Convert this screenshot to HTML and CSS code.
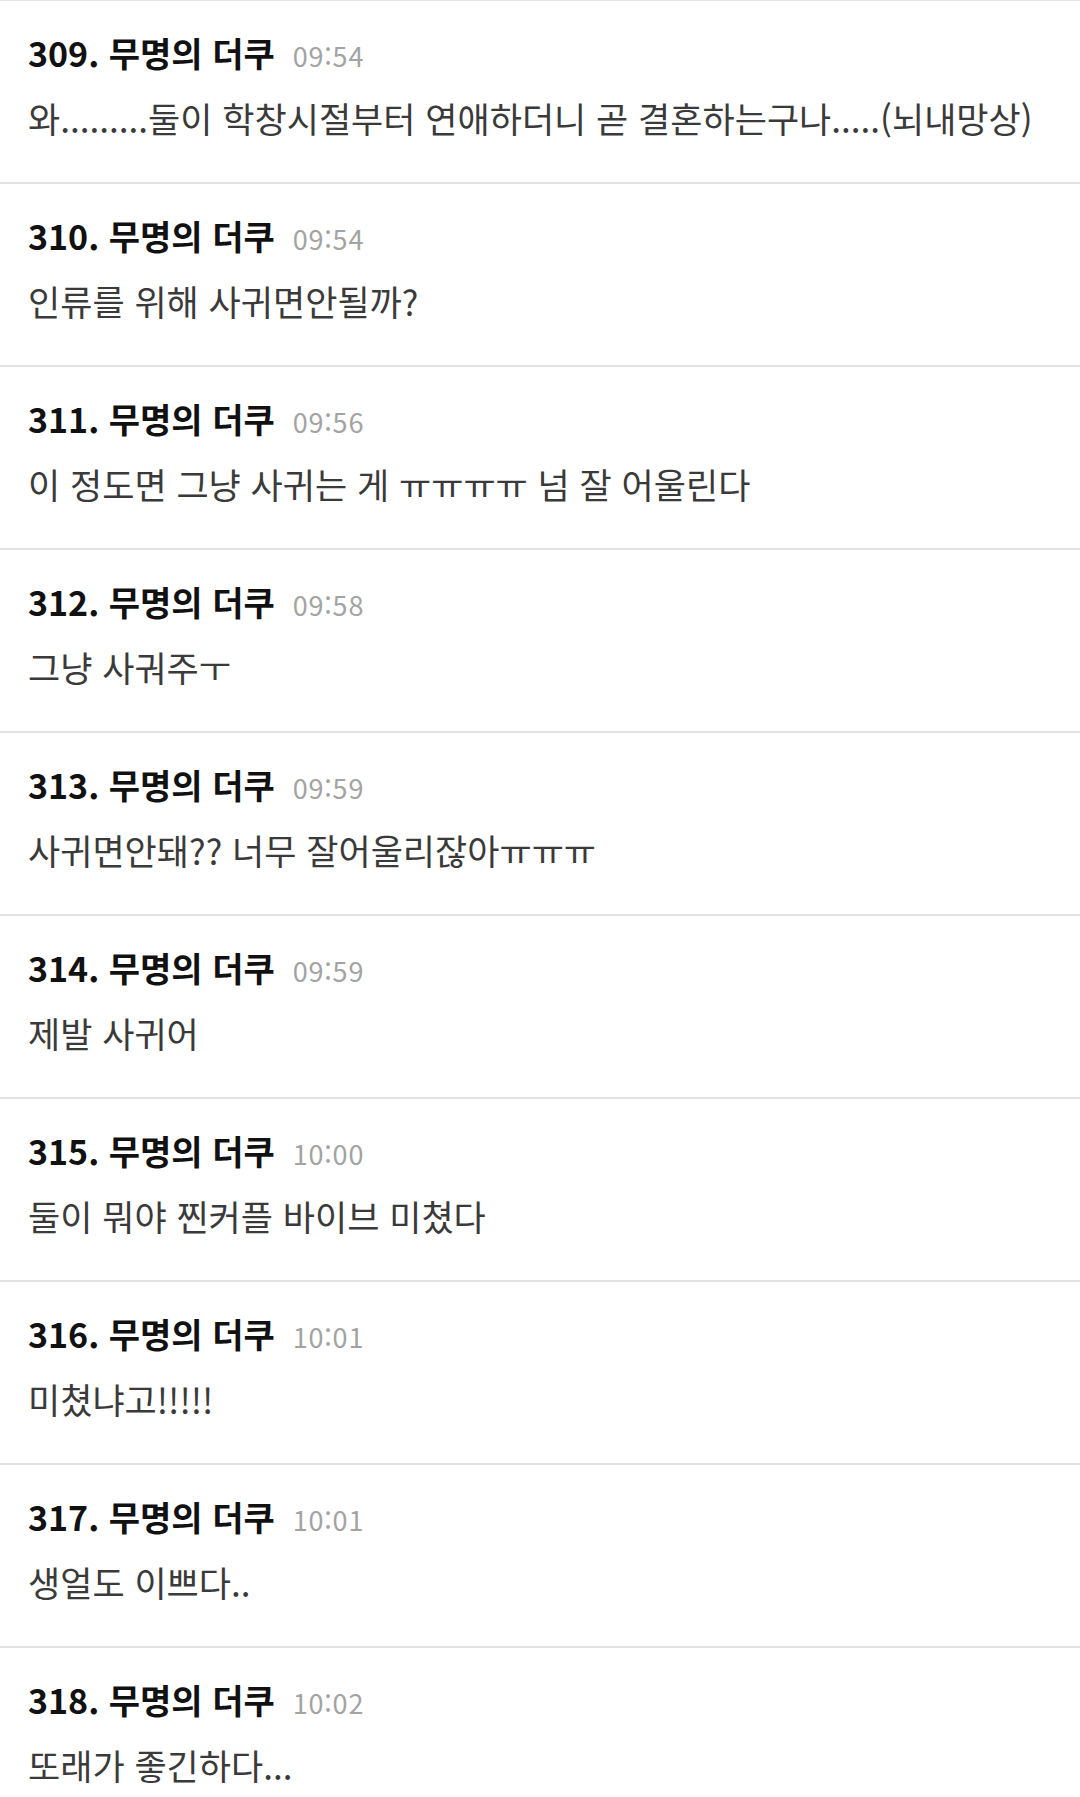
FILE: index.html
```html
<!DOCTYPE html>
<html lang="ko">
<head>
	<meta charset="UTF-8" />
	<title>댓글 목록</title>
	<link rel="stylesheet" href="styles.css">
</head>
<body>
	<!-- 댓글 목록 시작 -->
	<ul class="cmt-list">
		<li class="cmt">
			<div class="cmt-head"><span class="cmt-name">309. 무명의 더쿠</span><span class="cmt-time">09:54</span></div>
			<p class="cmt-text">와.........둘이 학창시절부터 연애하더니 곧 결혼하는구나.....(뇌내망상)</p>
		</li>
		<li class="cmt">
			<div class="cmt-head"><span class="cmt-name">310. 무명의 더쿠</span><span class="cmt-time">09:54</span></div>
			<p class="cmt-text">인류를 위해 사귀면안될까?</p>
		</li>
		<li class="cmt">
			<div class="cmt-head"><span class="cmt-name">311. 무명의 더쿠</span><span class="cmt-time">09:56</span></div>
			<p class="cmt-text">이 정도면 그냥 사귀는 게 ㅠㅠㅠㅠ 넘 잘 어울린다</p>
		</li>
		<li class="cmt">
			<div class="cmt-head"><span class="cmt-name">312. 무명의 더쿠</span><span class="cmt-time">09:58</span></div>
			<p class="cmt-text">그냥 사궈주ㅜ</p>
		</li>
		<li class="cmt">
			<div class="cmt-head"><span class="cmt-name">313. 무명의 더쿠</span><span class="cmt-time">09:59</span></div>
			<p class="cmt-text">사귀면안돼?? 너무 잘어울리잖아ㅠㅠㅠ</p>
		</li>
		<li class="cmt">
			<div class="cmt-head"><span class="cmt-name">314. 무명의 더쿠</span><span class="cmt-time">09:59</span></div>
			<p class="cmt-text">제발 사귀어</p>
		</li>
		<li class="cmt">
			<div class="cmt-head"><span class="cmt-name">315. 무명의 더쿠</span><span class="cmt-time">10:00</span></div>
			<p class="cmt-text">둘이 뭐야 찐커플 바이브 미쳤다</p>
		</li>
		<li class="cmt">
			<div class="cmt-head"><span class="cmt-name">316. 무명의 더쿠</span><span class="cmt-time">10:01</span></div>
			<p class="cmt-text">미쳤냐고!!!!!</p>
		</li>
		<li class="cmt">
			<div class="cmt-head"><span class="cmt-name">317. 무명의 더쿠</span><span class="cmt-time">10:01</span></div>
			<p class="cmt-text">생얼도 이쁘다..</p>
		</li>
		<li class="cmt">
			<div class="cmt-head"><span class="cmt-name">318. 무명의 더쿠</span><span class="cmt-time">10:02</span></div>
			<p class="cmt-text">또래가 좋긴하다...</p>
		</li>
	</ul>
	<!-- 댓글 목록 끝 -->
</body>
</html>
```

FILE: styles.css
```css
*{
	margin:0;
	padding:0;
}
li{
	list-style:none;
}
body{
	background:#fff;
	font-family:"Noto Sans CJK KR","Noto Sans",sans-serif;
}
.cmt-list{
	border-top:1px solid #e4e4e4;
}
.cmt{
	padding:32px 28px 40px;
	border-bottom:2px solid #e2e2e2;
}
.cmt-head{
	display:flex;
	align-items:baseline;
	height:40px;
	line-height:40px;
}
.cmt-name{
	font-size:34px;
	font-weight:bold;
	color:#111;
}
.cmt-time{
	margin-left:18px;
	font-size:27px;
	letter-spacing:0.8px;
	color:#a3a3a3;
}
.cmt-text{
	margin-top:21px;
	font-size:35px;
	line-height:48px;
	color:#3a3a3a;
	white-space:nowrap;
}
```
